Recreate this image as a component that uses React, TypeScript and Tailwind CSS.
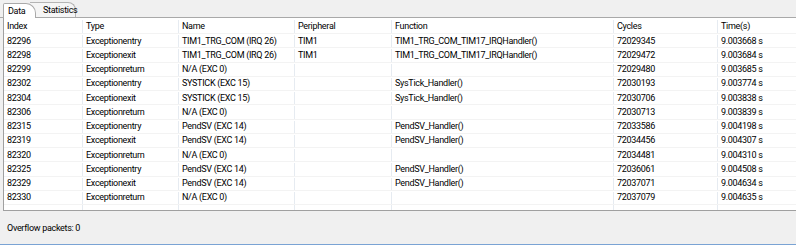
import React from 'react';

type Row = {
  index: string;
  type: string;
  name: string;
  peripheral: string;
  fn: string;
  cycles: string;
  time: string;
};

const rows: Row[] = [
  { index: '82296', type: 'Exceptionentry', name: 'TIM1_TRG_COM (IRQ 26)', peripheral: 'TIM1', fn: 'TIM1_TRG_COM_TIM17_IRQHandler()', cycles: '72029345', time: '9.003668 s' },
  { index: '82298', type: 'Exceptionexit', name: 'TIM1_TRG_COM (IRQ 26)', peripheral: 'TIM1', fn: 'TIM1_TRG_COM_TIM17_IRQHandler()', cycles: '72029472', time: '9.003684 s' },
  { index: '82299', type: 'Exceptionreturn', name: 'N/A (EXC 0)', peripheral: '', fn: '', cycles: '72029480', time: '9.003685 s' },
  { index: '82302', type: 'Exceptionentry', name: 'SYSTICK (EXC 15)', peripheral: '', fn: 'SysTick_Handler()', cycles: '72030193', time: '9.003774 s' },
  { index: '82304', type: 'Exceptionexit', name: 'SYSTICK (EXC 15)', peripheral: '', fn: 'SysTick_Handler()', cycles: '72030706', time: '9.003838 s' },
  { index: '82306', type: 'Exceptionreturn', name: 'N/A (EXC 0)', peripheral: '', fn: '', cycles: '72030713', time: '9.003839 s' },
  { index: '82315', type: 'Exceptionentry', name: 'PendSV (EXC 14)', peripheral: '', fn: 'PendSV_Handler()', cycles: '72033586', time: '9.004198 s' },
  { index: '82319', type: 'Exceptionexit', name: 'PendSV (EXC 14)', peripheral: '', fn: 'PendSV_Handler()', cycles: '72034456', time: '9.004307 s' },
  { index: '82320', type: 'Exceptionreturn', name: 'N/A (EXC 0)', peripheral: '', fn: '', cycles: '72034481', time: '9.004310 s' },
  { index: '82325', type: 'Exceptionentry', name: 'PendSV (EXC 14)', peripheral: '', fn: 'PendSV_Handler()', cycles: '72036061', time: '9.004508 s' },
  { index: '82329', type: 'Exceptionexit', name: 'PendSV (EXC 14)', peripheral: '', fn: 'PendSV_Handler()', cycles: '72037071', time: '9.004634 s' },
  { index: '82330', type: 'Exceptionreturn', name: 'N/A (EXC 0)', peripheral: '', fn: '', cycles: '72037079', time: '9.004635 s' },
];

const cols = 'grid grid-cols-[79px_96px_116px_97px_222px_104px_1fr]';
const cell = 'border-r border-[#e6ebf1] pl-[3px] whitespace-nowrap overflow-hidden';

const TableRow = ({ cells, header }: { cells: string[]; header?: boolean }) => (
  <div className={`${cols} ${header ? 'h-[16px] pt-[2px]' : 'h-[14.25px] pt-px'} items-center border-b border-[#f3f3f3]`}>
    {cells.map((c, i) => (
      <div key={i} className={`${cell} h-full flex items-center ${i === cells.length - 1 ? 'border-r-0' : ''}`}>
        {c}
      </div>
    ))}
  </div>
);

const App = () => {
  return (
    <div
      className="w-[796px] h-[245px] flex flex-col bg-[#f0f0f0] text-[9px] tracking-[-0.3px] text-black leading-none overflow-hidden"
      style={{ fontFamily: 'Roboto, sans-serif' }}
    >
      {/* tab strip */}
      <div className="h-[18px] flex items-end pl-[3px] border-b border-[#a9a9a9]">
        <div className="relative z-10 h-[15px] w-[33px] bg-white border-t border-l border-r border-[#a9a9a9] rounded-tr-[10px] rounded-tl-[2px] -mb-px pl-[4px] pt-px flex items-center">
          Data
        </div>
        <div className="h-[15px] w-[46px] -ml-[6px] bg-[#f5f5f5] border-t border-r border-[#b4b4b4] rounded-tr-[8px] pl-[13px] pt-px flex items-center">
          Statistics
        </div>
      </div>

      {/* table */}
      <div className="ml-[3px] h-[193px] bg-white border-l border-b border-[#a0a0a0] flex flex-col">
        <TableRow header cells={['Index', 'Type', 'Name', 'Peripheral', 'Function', 'Cycles', 'Time(s)']} />
        {rows.map((r) => (
          <TableRow key={r.index} cells={[r.index, r.type, r.name, r.peripheral, r.fn, r.cycles, r.time]} />
        ))}
        <div className={`${cols} flex-1`}>
          {[0, 1, 2, 3, 4, 5, 6].map((i) => (
            <div key={i} className={i === 6 ? '' : 'border-r border-[#e6ebf1]'} />
          ))}
        </div>
      </div>

      {/* status */}
      <div className="flex-1 flex items-center pl-[7px] pt-px">Overflow packets: 0</div>
      <div className="h-px bg-[#7aa3d4]" />
    </div>
  );
};

export default App;
